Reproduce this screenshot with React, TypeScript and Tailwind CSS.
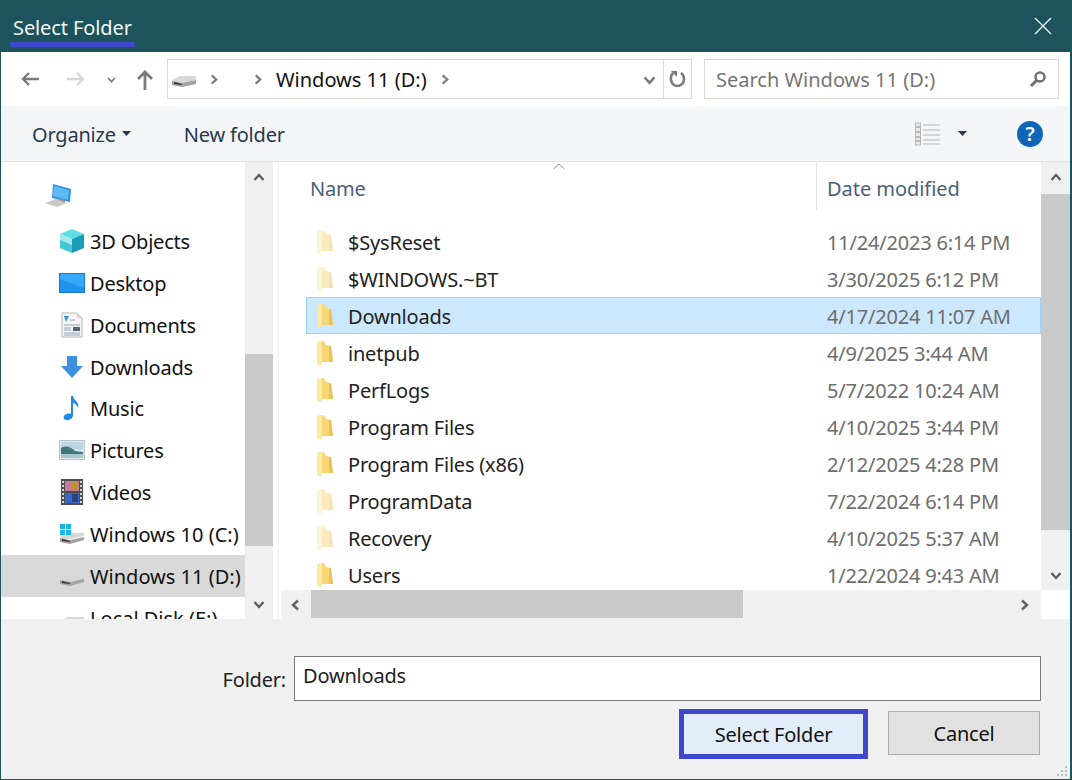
import React from "react";

const Chevron = ({ dir = "right", color = "#7b7b7b", size = 12 }: { dir?: string; color?: string; size?: number }) => {
  const paths: Record<string, string> = {
    right: "M4 1.5 L9 6 L4 10.5",
    left: "M8 1.5 L3 6 L8 10.5",
    up: "M1.5 8 L6 3 L10.5 8",
    down: "M1.5 4 L6 9 L10.5 4",
  };
  return (
    <svg width={size} height={size} viewBox="0 0 12 12" fill="none">
      <path d={paths[dir]} stroke={color} strokeWidth="2.4" />
    </svg>
  );
};

const Folder = ({ faded }: { faded?: boolean }) => (
  <svg width="20" height="26" viewBox="0 0 20 26" className={faded ? "opacity-45" : ""}>
    <path d="M2 2 L9 1 L11 5 L16 6 L18 22 L7 22 L6 25 L2 24 Z" fill="#f7d674" />
    <path d="M2 2 L7 1 L7 23 L4 25 L2 24 Z" fill="#fbeaa6" />
    <path d="M14 6 L16 6 L18 22 L14 22 Z" fill="#ecc05a" />
  </svg>
);

const Drive = ({ win }: { win?: boolean }) => (
  <svg width="26" height="24" viewBox="0 0 26 24">
    <path d="M1 15 L9 11 L25 11 L25 14 L11 17 L2 17 Z" fill="#d7d7d7" />
    <path d="M1 16 L11 18 L25 15 L25 18 L11 22 L1 20 Z" fill="#a3a3a3" />
    <path d="M3 17 L11 19 L11 20 L3 19 Z" fill="#333" />
    {win && (
      <g fill="#19b5e8">
        <rect x="1" y="2" width="5" height="5" />
        <rect x="7" y="2" width="5" height="5" />
        <rect x="1" y="8" width="5" height="5" />
        <rect x="7" y="8" width="5" height="5" />
      </g>
    )}
  </svg>
);

const ComputerIcon = () => (
  <svg width="28" height="26" viewBox="0 0 28 26">
    <path d="M9 1 L27 6 L26 19 L8 15 Z" fill="#2f8fd8" />
    <path d="M10 3 L25 7 L24 17 L9 13 Z" fill="#5bbcf3" />
    <path d="M13 15 L21 17 L21 20 L13 18 Z" fill="#8a9aa5" />
    <path d="M1 20 L12 16 L23 20 L13 24 Z" fill="#c9c9c9" />
  </svg>
);

const CubeIcon = () => (
  <svg width="26" height="26" viewBox="0 0 26 26">
    <path d="M1 6 L13 1 L25 6 L13 11 Z" fill="#5fdde6" />
    <path d="M1 6 L13 11 L13 25 L1 20 Z" fill="#a5e9ea" />
    <path d="M25 6 L13 11 L13 25 L25 20 Z" fill="#1a9db8" />
    <path d="M1 12 L13 17 L13 25 L1 20 Z" fill="#45c5d8" />
  </svg>
);

const DesktopIcon = () => (
  <svg width="26" height="20" viewBox="0 0 26 20">
    <rect x="0.5" y="0.5" width="25" height="19" fill="#1e94f0" stroke="#1578c8" />
    <path d="M1 1 H25 V15 L1 6 Z" fill="#35a9f7" />
  </svg>
);

const DocumentIcon = () => (
  <svg width="22" height="26" viewBox="0 0 22 26">
    <path d="M1 1 H16 L21 6 V25 H1 Z" fill="#f7f7f7" stroke="#b5b5b5" />
    <path d="M16 1 V6 H21 Z" fill="#f0c8c0" />
    <path d="M3 4 L8 4 L5 10 Z" fill="#3a8fd8" />
    <path d="M9 8 H14 M3 13 H19 M3 21 H19 M3 23 H19" stroke="#8ca2b8" strokeWidth="1" />
    <rect x="12" y="15" width="7" height="4" fill="#4d6478" />
    <path d="M3 16 H10 M3 18 H10" stroke="#8ca2b8" strokeWidth="1" />
  </svg>
);

const DownloadIcon = () => (
  <svg width="24" height="24" viewBox="0 0 24 24">
    <path d="M7 1 H17 V11 H23 L12 23 L1 11 H7 Z" fill="#3d8fe0" />
  </svg>
);

const MusicIcon = () => (
  <svg width="20" height="26" viewBox="0 0 20 26">
    <path d="M9 1 L11 1 C12 6 18 7 16 13 C15 10 13 8.500 11 8 L11 20 C11 23 8 25 5 25 C2 25 1 23 2 21 C3 19 6 18 9 19 Z" fill="#1e8be0" />
  </svg>
);

const PicturesIcon = () => (
  <svg width="26" height="20" viewBox="0 0 26 20">
    <rect x="0.500" y="0.500" width="25" height="19" fill="#dfe8ee" stroke="#b8c4cc" />
    <rect x="2" y="2" width="22" height="8" fill="#bcd6e6" />
    <path d="M2 8 C7 5 12 7 16 11 L24 12 V18 H2 Z" fill="#3f7a78" />
    <path d="M2 14 H24 V18 H2 Z" fill="#a9c4cc" />
  </svg>
);

const VideosIcon = () => (
  <svg width="22" height="26" viewBox="0 0 22 26">
    <rect x="0" y="0" width="22" height="26" fill="#4d4d4d" />
    <rect x="4" y="2" width="14" height="10" fill="#c8789c" />
    <rect x="4" y="14" width="14" height="10" fill="#3a66c8" />
    <rect x="11" y="3" width="6" height="8" fill="#b8962e" />
    <rect x="11" y="15" width="6" height="8" fill="#2e3f7a" />
    <path d="M2 2 V24 M20 2 V24" stroke="#d8d8d8" strokeWidth="2" strokeDasharray="2 2" />
  </svg>
);

const navItems: { label: string; icon: React.ReactNode; active?: boolean; drive?: boolean }[] = [
  { label: "3D Objects", icon: <CubeIcon /> },
  { label: "Desktop", icon: <DesktopIcon /> },
  { label: "Documents", icon: <DocumentIcon /> },
  { label: "Downloads", icon: <DownloadIcon /> },
  { label: "Music", icon: <MusicIcon /> },
  { label: "Pictures", icon: <PicturesIcon /> },
  { label: "Videos", icon: <VideosIcon /> },
  { label: "Windows 10 (C:)", icon: <Drive win />, drive: true },
  { label: "Windows 11 (D:)", icon: <Drive />, active: true, drive: true },
  { label: "Local Disk (E:)", icon: <Drive />, drive: true },
];

const files = [
  { name: "$SysReset", date: "11/24/2023 6:14 PM", faded: true },
  { name: "$WINDOWS.~BT", date: "3/30/2025 6:12 PM", faded: true },
  { name: "Downloads", date: "4/17/2024 11:07 AM", selected: true },
  { name: "inetpub", date: "4/9/2025 3:44 AM" },
  { name: "PerfLogs", date: "5/7/2022 10:24 AM" },
  { name: "Program Files", date: "4/10/2025 3:44 PM" },
  { name: "Program Files (x86)", date: "2/12/2025 4:28 PM" },
  { name: "ProgramData", date: "7/22/2024 6:14 PM", faded: true },
  { name: "Recovery", date: "4/10/2025 5:37 AM", faded: true },
  { name: "Users", date: "1/22/2024 9:43 AM" },
];

const App = () => {
  return (
    <div className="relative w-[1072px] h-[780px] flex flex-col overflow-hidden bg-[#f0f0f0] border-l border-r-2 border-b border-[#1c535c] font-['Noto_Sans',sans-serif] text-[20px] tracking-[-0.2px]">
      {/* title bar */}
      <div className="relative h-[52px] shrink-0 bg-[#1c535c] flex items-center justify-between pl-3 pr-[18px] text-[#f2f7f7]">
        <span className="relative mt-[4px] tracking-[-0.1px]">
          Select Folder
          <span className="absolute left-[-3px] right-[-3px] bottom-[-4px] h-[5px] rounded-sm bg-[#3f48cc]" />
        </span>
        <svg width="18" height="18" viewBox="0 0 18 18" fill="none" stroke="#f2f7f7" strokeWidth="1.3">
          <path d="M1 1 L17 17 M17 1 L1 17" />
        </svg>
      </div>

      {/* nav bar */}
      <div className="h-[54px] shrink-0 bg-white flex items-center">
        <div className="w-[166px] flex items-center shrink-0 pl-[19px]">
          <svg width="20" height="16" viewBox="0 0 20 16" fill="none">
            <path d="M19 8 H3 M9 2 L3 8 L9 14" stroke="#7b7b7b" strokeWidth="2.4" />
          </svg>
          <svg width="20" height="16" viewBox="0 0 20 16" fill="none" className="ml-[26px]">
            <path d="M1 8 H17 M11 2 L17 8 L11 14" stroke="#d6d6d6" strokeWidth="2.4" />
          </svg>
          <span className="ml-[21px]">
            <Chevron dir="down" size={9} />
          </span>
          <svg width="18" height="20" viewBox="0 0 18 20" fill="none" className="ml-[20px] mt-[2px]">
            <path d="M9 20 V3 M2 9 L9 2 L16 9" stroke="#7b7b7b" strokeWidth="2.8" />
          </svg>
        </div>
        <div className="w-[525px] h-[40px] shrink-0 border border-[#d9d9d2] flex items-center">
          <span className="ml-[3px] mt-[2px]">
            <svg width="26" height="16" viewBox="0 0 26 16">
              <path d="M1 8 L9 4 L25 4 L25 8 L11 11 L2 10 Z" fill="#d7d7d7" />
              <path d="M1 9 L11 11 L25 8 L25 12 L11 15 L1 13 Z" fill="#a3a3a3" />
              <path d="M3 10 L11 12 L11 13 L3 12 Z" fill="#333" />
            </svg>
          </span>
          <span className="ml-[11px]">
            <Chevron size={11} />
          </span>
          <span className="ml-[33px]">
            <Chevron size={11} />
          </span>
          <span className="ml-[13px] mt-[2px] text-[#111] tracking-normal">Windows 11 (D:)</span>
          <span className="ml-[12px]">
            <Chevron size={11} />
          </span>
          <span className="ml-auto mr-[7px]">
            <Chevron dir="down" size={13} />
          </span>
          <div className="w-[28px] h-full border-l border-[#d9d9d2] flex items-center justify-center">
            <svg width="18" height="18" viewBox="0 0 18 18" fill="none">
              <path d="M4 3 C1 6 1 12 5 15 C9 17.500 15 15 15 9 C15 6 13.500 4 12 3" stroke="#7b7b7b" strokeWidth="2.6" />
              <path d="M2 1 H8 V7 Z" fill="#7b7b7b" />
            </svg>
          </div>
        </div>
        <div className="ml-[12px] w-[355px] h-[40px] shrink-0 border border-[#d9d9d2] flex items-center justify-between pl-[11px] pr-[8px] text-[#757575]">
          <span className="mt-[2px] tracking-normal">Search Windows 11 (D:)</span>
          <svg width="18" height="18" viewBox="0 0 18 18" fill="none" className="mr-[3px]">
            <circle cx="11" cy="7" r="4.500" stroke="#6f6f6f" strokeWidth="2.500" />
            <path d="M7.500 10.500 L2 16" stroke="#6f6f6f" strokeWidth="3" />
          </svg>
        </div>
      </div>

      {/* toolbar */}
      <div className="h-[56px] shrink-0 bg-[#f3f5f7] border-b border-[#e3e3e3] flex items-center pl-[31px] pr-[27px] text-[#26384f]">
        <span className="mt-[2px]">Organize</span>
        <svg width="9" height="5" viewBox="0 0 9 5" className="ml-[6px]">
          <path d="M0 0 H9 L4.500 5 Z" fill="#26384f" />
        </svg>
        <span className="ml-[53px] mt-[2px]">New folder</span>
        <svg width="26" height="24" viewBox="0 0 26 24" fill="none" className="ml-auto">
          <rect x="0.500" y="1" width="5" height="22" fill="#e9e9e9" stroke="#b5b5b5" />
          <path d="M1 5 H5 M1 10 H5 M1 15 H5 M1 19 H5" stroke="#8a8a8a" />
          <path d="M8 3 H25 M8 8 H25 M8 13 H25 M8 18 H25 M8 22 H25" stroke="#b5b5b5" />
        </svg>
        <svg width="9" height="5" viewBox="0 0 9 5" className="ml-[17px] mr-[50px]">
          <path d="M0 0 H9 L4.500 5 Z" fill="#26384f" />
        </svg>
        <span className="w-[26px] h-[26px] rounded-full bg-[#0f66b8] text-white text-[20px] leading-[26px] text-center font-semibold">?</span>
      </div>

      {/* body */}
      <div className="h-[457px] shrink-0 flex bg-white">
        <div className="w-[244px] shrink-0 overflow-hidden pt-[13px]">
          <div className="h-[42px] pl-[43px] flex items-center mb-[3px]">
            <ComputerIcon />
          </div>
          {navItems.map((item) => (
            <div key={item.label} className={`h-[41.875px] flex items-center text-[#111] whitespace-nowrap ${item.active ? "bg-[#d9d9d9]" : ""}`}>
              <span className="w-[89px] pl-[57px] pr-[4px] shrink-0 flex justify-center">{item.icon}</span>
              <span className={item.drive ? "pt-[2px] tracking-normal" : "pt-[2px]"}>{item.label}</span>
            </div>
          ))}
        </div>

        {/* left scrollbar */}
        <div className="w-[28px] shrink-0 bg-[#f0f0f0] flex flex-col">
          <div className="h-[32px] flex items-center justify-center">
            <Chevron dir="up" color="#606060" />
          </div>
          <div className="h-[160px]" />
          <div className="h-[192px] bg-[#c9c9c9]" />
          <div className="flex-1" />
          <div className="h-[30px] flex items-center justify-center">
            <Chevron dir="down" color="#606060" />
          </div>
        </div>

        <div className="w-[5px] shrink-0" />

        {/* file list */}
        <div className="w-[792px] shrink-0 flex flex-col border-l border-[#f0f0f0]">
          <div className="flex h-[428px]">
            <div className="w-[762px] shrink-0 flex flex-col overflow-hidden">
              <div className="relative h-[48px] shrink-0 flex text-[#4c607a]">
                <span className="absolute left-[274px] top-[1px]">
                  <svg width="12" height="7" viewBox="0 0 12 7" fill="none">
                    <path d="M0.500 6 L6 1 L11.500 6" stroke="#8a8a8a" />
                  </svg>
                </span>
                <div className="w-[538px] pl-[31px] pt-[12px] border-r border-[#e3e3e3]">Name</div>
                <div className="pl-[10px] pt-[12px] tracking-[-0.05px]">Date modified</div>
              </div>
              <div className="pt-[13px]">
                {files.map((f) => (
                  <div
                    key={f.name}
                    className={`ml-[27px] h-[37px] flex items-center border whitespace-nowrap ${f.selected ? "bg-[#cce8ff] border-[#99d1ff]" : "border-transparent"}`}
                  >
                    <span className="w-[41px] pl-[8px] shrink-0 flex">
                      <Folder faded={f.faded} />
                    </span>
                    <span className="w-[479px] shrink-0 pt-[2px] text-[#222]">{f.name}</span>
                    <span className="pt-[2px] text-[#6d6d6d]">{f.date}</span>
                  </div>
                ))}
              </div>
            </div>
            <div className="w-[29px] shrink-0 bg-[#f0f0f0] flex flex-col">
              <div className="h-[32px] flex items-center justify-center">
                <Chevron dir="up" color="#606060" />
              </div>
              <div className="h-[336px] bg-[#c9c9c9]" />
              <div className="flex-1" />
              <div className="h-[30px] flex items-center justify-center">
                <Chevron dir="down" color="#606060" />
              </div>
            </div>
          </div>
          <div className="flex h-[29px]">
            <div className="w-[760px] ml-[2px] bg-[#f0f0f0] flex">
              <div className="w-[30px] flex items-center justify-center">
                <Chevron dir="left" color="#606060" />
              </div>
              <div className="w-[432px] h-[28px] bg-[#c9c9c9]" />
              <div className="flex-1 flex items-center justify-end pr-[11px]">
                <Chevron color="#606060" />
              </div>
            </div>
          </div>
        </div>
      </div>

      {/* footer */}
      <div className="flex-1 flex flex-col bg-[#f0f0f0]">
        <div className="mt-[37px] flex items-center justify-end pr-[29px]">
          <span className="text-[#222] mr-[8px] mt-[2px]">Folder:</span>
          <div className="w-[747px] h-[45px] bg-white border border-[#7a7a7a] pl-[8px] text-[#222] leading-[38px]">Downloads</div>
        </div>
        <div className="mt-[8px] flex items-center justify-end pr-[30px]">
          <div className="w-[189px] h-[50px] pt-[2px] border-[5px] border-[#3f48cc] bg-[#e1eefa] flex items-center justify-center text-[#111]">Select Folder</div>
          <div className="ml-[20px] mb-[2px] w-[152px] h-[44px] pt-[2px] border border-[#adadad] bg-[#e1e1e1] flex items-center justify-center text-[#111]">Cancel</div>
        </div>
      </div>

      {/* resize grip */}
      <svg width="12" height="12" viewBox="0 0 12 12" className="absolute right-[1px] bottom-[1px]" fill="#bdbdbd">
        <rect x="8" y="0" width="2" height="2" />
        <rect x="4" y="4" width="2" height="2" />
        <rect x="8" y="4" width="2" height="2" />
        <rect x="0" y="8" width="2" height="2" />
        <rect x="4" y="8" width="2" height="2" />
        <rect x="8" y="8" width="2" height="2" />
      </svg>
    </div>
  );
};

export default App;
